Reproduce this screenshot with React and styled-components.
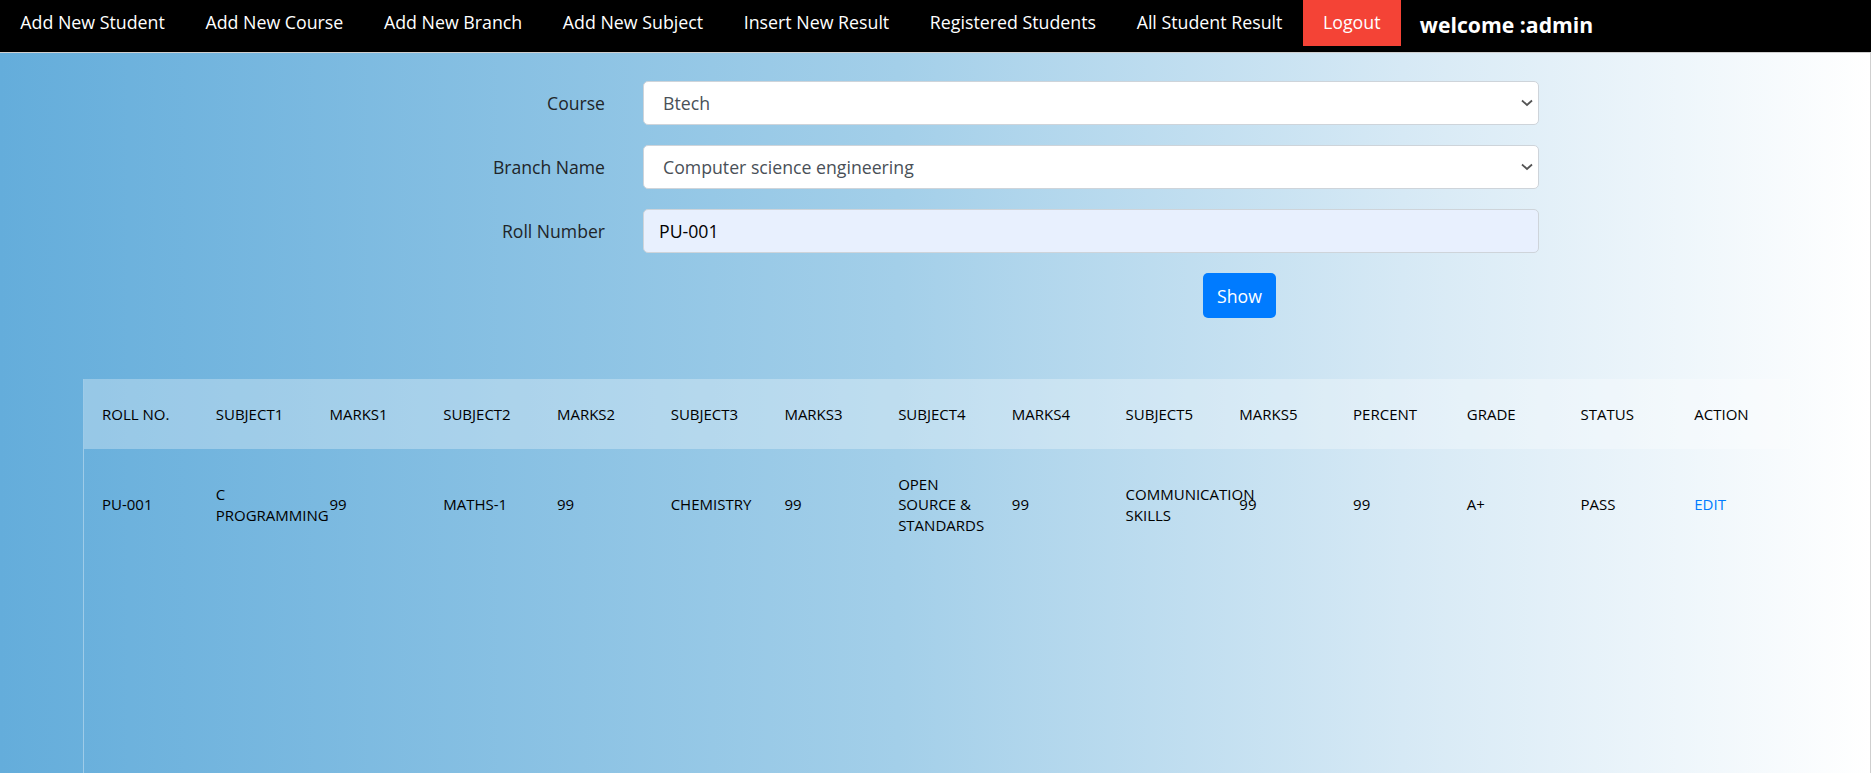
import styled, { createGlobalStyle } from "styled-components";

const GlobalStyle = createGlobalStyle`
  html, body {
    margin: 0;
    padding: 0;
    background: #ffffff;
  }
  body {
    font-family: "Open Sans", "Noto Sans", "Liberation Sans", sans-serif;
    color: #212529;
  }
  * {
    box-sizing: border-box;
  }
`;

const Page = styled.div`
  width: 1871px;
`;

const Nav = styled.nav`
  height: 52px;
  background: #000;
  display: flex;
  align-items: flex-start;
`;

const NavList = styled.ul`
  list-style: none;
  margin: 0;
  padding: 0;
  display: flex;
`;

const NavLink = styled.a`
  display: block;
  height: 46px;
  line-height: 45px;
  padding: 0 20.3px;
  font-size: 17.8px;
  color: #fff;
  text-decoration: none;
  background: ${(p) => (p.$danger ? "#f44336" : "transparent")};
  white-space: nowrap;
`;

const Welcome = styled.h3`
  margin: 0 0 0 19px;
  height: 50px;
  line-height: 50px;
  font-size: 21.2px;
  font-weight: 700;
  color: #fff;
  white-space: nowrap;
`;

const Main = styled.main`
  min-height: calc(100vh - 52px);
  border-top: 1px solid #cfcfcf;
  border-right: 1px solid #cfcfcf;
  background: linear-gradient(to right, #64addb 0%, #a3cfe9 48%, #d6e9f5 75%, #ffffff 100%);
  padding-top: 28px;
`;

const Form = styled.form`
  margin-left: 405px;
  display: grid;
  grid-template-columns: 200px 896px;
  column-gap: 38px;
  row-gap: 20px;
  align-items: center;
`;

const Label = styled.label`
  text-align: right;
  font-size: 17.6px;
  color: #212529;
`;

const SelectWrap = styled.div`
  position: relative;
`;

const Select = styled.select`
  appearance: none;
  width: 100%;
  height: 44px;
  padding: 0 40px 0 19px;
  border: 1px solid #ced4da;
  border-radius: 5px;
  background: #fff;
  font-family: inherit;
  font-size: 17.7px;
  color: #495057;
`;

const Chevron = styled.svg`
  position: absolute;
  right: 6px;
  top: 50%;
  width: 12px;
  height: 8px;
  margin-top: -4px;
  pointer-events: none;
`;

const Input = styled.input`
  width: 100%;
  height: 44px;
  padding: 0 15px;
  border: 1px solid #ced4da;
  border-radius: 5px;
  background: #e8f0fe;
  font-family: inherit;
  font-size: 17.7px;
  color: #000;
`;

const ShowButton = styled.button`
  grid-column: 2;
  justify-self: start;
  margin-left: 560px;
  height: 45px;
  padding: 0 14px;
  border: none;
  border-radius: 5px;
  background: #007bff;
  color: #fff;
  font-family: inherit;
  font-size: 17.7px;
`;

const TableBox = styled.div`
  margin: 61px 0 0 83px;
  width: 1707px;
  min-height: 394px;
  border-left: 1px solid rgba(255, 255, 255, 0.35);
  font-size: 15px;
  color: #000;
`;

const Row = styled.div`
  display: grid;
  grid-template-columns: repeat(15, minmax(0, 1fr));
  align-items: center;
  height: ${(p) => (p.$head ? "70px" : "111px")};
  background: ${(p) => (p.$head ? "rgba(255, 255, 255, 0.3)" : "transparent")};
`;

const Cell = styled.div`
  padding: 0 18px;
  line-height: 20.5px;
  color: ${(p) => (p.$link ? "#007bff" : "#000")};
`;

const columns = [
  "ROLL NO.", "SUBJECT1", "MARKS1", "SUBJECT2", "MARKS2", "SUBJECT3", "MARKS3",
  "SUBJECT4", "MARKS4", "SUBJECT5", "MARKS5", "PERCENT", "GRADE", "STATUS", "ACTION",
];

const result = [
  "PU-001", "C PROGRAMMING", "99", "MATHS-1", "99", "CHEMISTRY", "99",
  "OPEN SOURCE & STANDARDS", "99", "COMMUNICATION SKILLS", "99", "99", "A+", "PASS", "EDIT",
];

const navItems = [
  "Add New Student", "Add New Course", "Add New Branch", "Add New Subject",
  "Insert New Result", "Registered Students", "All Student Result",
];

function ChevronIcon() {
  return (
    <Chevron viewBox="0 0 12 8">
      <path d="M1 1.5 L6 6 L11 1.5" fill="none" stroke="#555" strokeWidth="1.8" />
    </Chevron>
  );
}

function App() {
  return (
    <Page>
      <GlobalStyle />
      <Nav>
        <NavList>
          {navItems.map((item) => (
            <li key={item}>
              <NavLink href="#">{item}</NavLink>
            </li>
          ))}
          <li>
            <NavLink href="#" $danger>Logout</NavLink>
          </li>
        </NavList>
        <Welcome>welcome :admin</Welcome>
      </Nav>
      <Main>
        <Form onSubmit={(e) => e.preventDefault()}>
          <Label>Course</Label>
          <SelectWrap>
            <Select defaultValue="Btech">
              <option>Btech</option>
            </Select>
            <ChevronIcon />
          </SelectWrap>
          <Label>Branch Name</Label>
          <SelectWrap>
            <Select defaultValue="Computer science engineering">
              <option>Computer science engineering</option>
            </Select>
            <ChevronIcon />
          </SelectWrap>
          <Label>Roll Number</Label>
          <Input defaultValue="PU-001" />
          <ShowButton type="submit">Show</ShowButton>
        </Form>
        <TableBox>
          <Row $head>
            {columns.map((c) => (
              <Cell key={c}>{c}</Cell>
            ))}
          </Row>
          <Row>
            {result.map((v, i) => (
              <Cell key={i} $link={i === result.length - 1}>{v}</Cell>
            ))}
          </Row>
        </TableBox>
      </Main>
    </Page>
  );
}

export default App;
